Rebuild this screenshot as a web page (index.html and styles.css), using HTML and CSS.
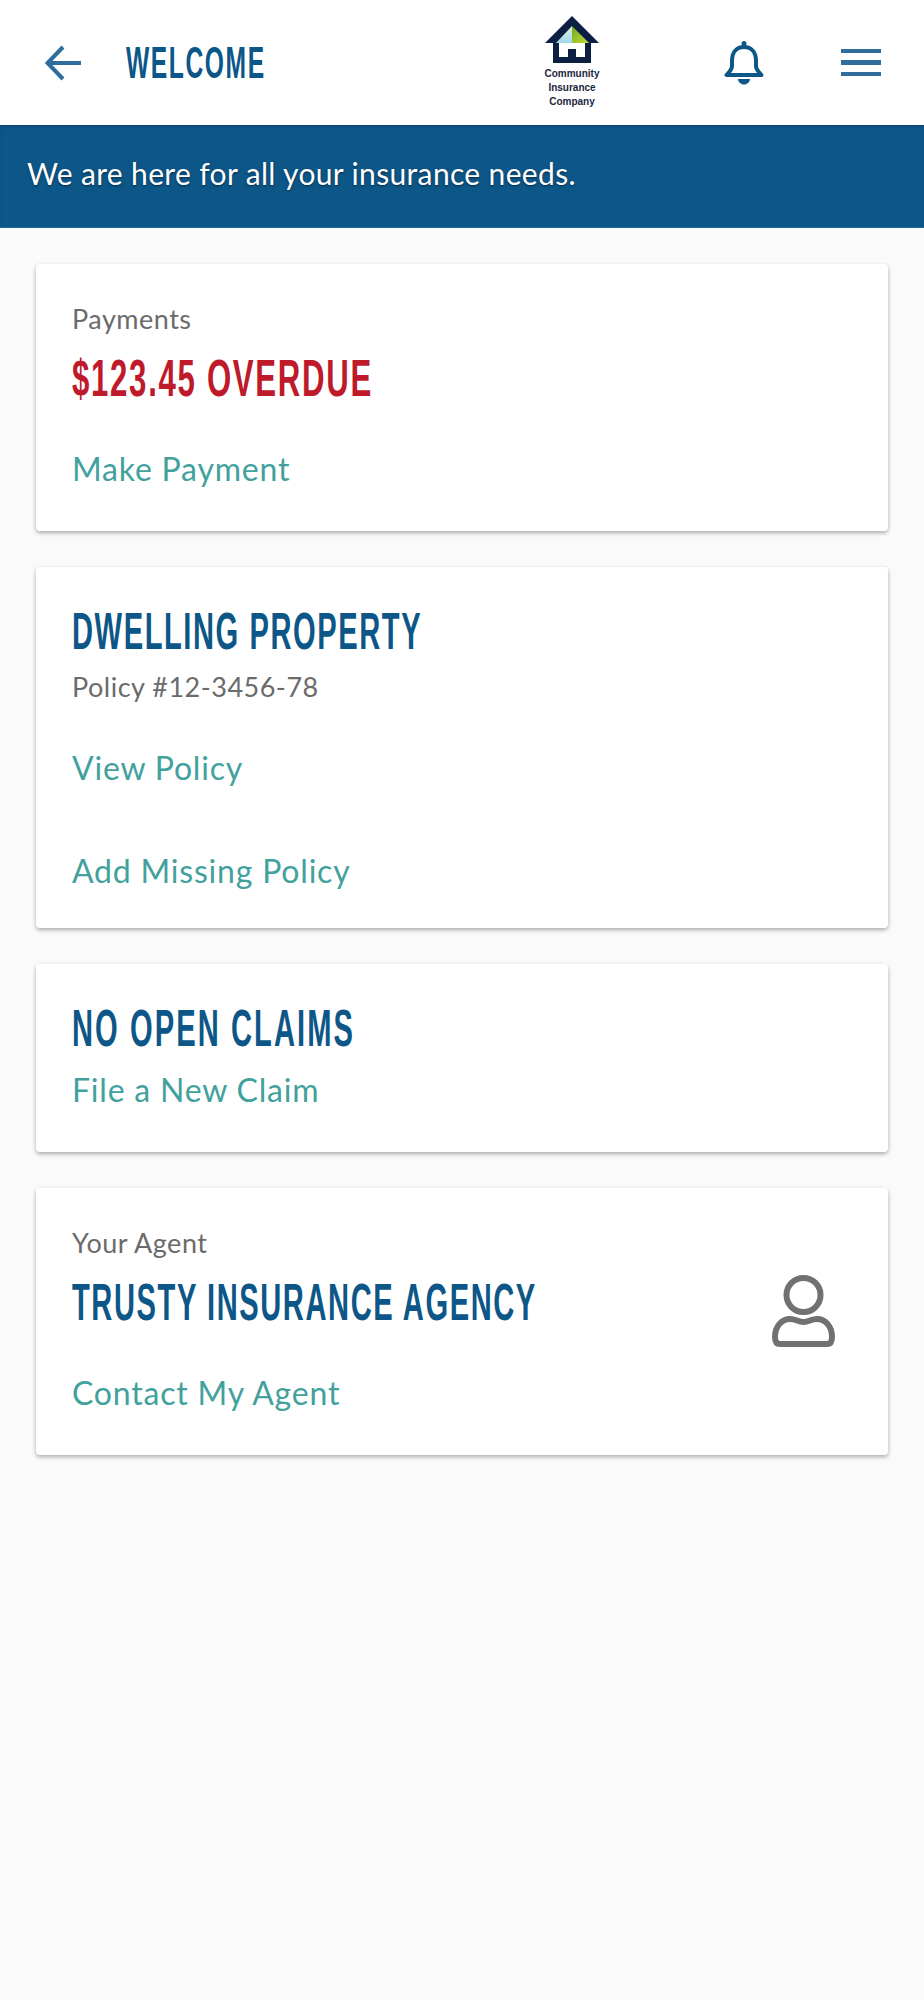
FILE: index.html
```html
<!DOCTYPE html>
<html lang="en">
<head>
    <meta charset="UTF-8">
    <meta name="viewport" content="width=device-width, initial-scale=1.0">
    <title>Welcome</title>
    <link rel="stylesheet" href="styles.css">
</head>
<body>

    <header class="topbar">
        <svg class="back-icon" viewBox="0 0 36 36" fill="none" stroke="#2f6d9c" stroke-width="4">
            <path d="M36 18H3M18 2 2.500 18 18 34"/>
        </svg>
        <div class="title-wrap">
            <h1 class="page-title">WELCOME</h1>
        </div>
        <div class="logo">
            <svg class="logo-house" viewBox="0 0 54 48">
                <defs>
                    <linearGradient id="roofLeft" x1="0" y1="0" x2="0" y2="1">
                        <stop offset="0" stop-color="#e4f1d6"/>
                        <stop offset="1" stop-color="#9fd8f0"/>
                    </linearGradient>
                    <linearGradient id="roofRight" x1="0" y1="0" x2="1" y2="1">
                        <stop offset="0" stop-color="#6fa81e"/>
                        <stop offset="1" stop-color="#c4dc3c"/>
                    </linearGradient>
                </defs>
                <path fill="#0b1f42" d="M27 0 54 27H46V47H8V27H0Z"/>
                <path fill="url(#roofLeft)" d="M27 10V27H11Z"/>
                <path fill="url(#roofRight)" d="M27 10V27H44Z"/>
                <path fill="#fff" d="M14 27H40V41H31V33H23V41H14Z"/>
            </svg>
            <div class="logo-name">Community<br>Insurance<br>Company</div>
        </div>
        <svg class="bell-icon" viewBox="0 0 40 46" fill="none" stroke="#0c5688" stroke-width="4">
            <path d="M20 7C11 7 8 14 8 21V26C8 30 5 32 2.500 35H37.500C35 32 32 30 32 26V21C32 14 29 7 20 7Z" stroke-linejoin="round"/>
            <circle cx="20" cy="3.500" r="2.500" fill="#0c5688" stroke="none"/>
            <path d="M14 39H26C26 42 23 44.500 20 44.500S14 42 14 39Z" fill="#0c5688" stroke="none"/>
        </svg>
        <div class="menu-icon">
            <span></span>
            <span></span>
            <span></span>
        </div>
    </header>

    <div class="banner">We are here for all your insurance needs.</div>

    <main class="cards">
        <section class="card">
            <p class="label">Payments</p>
            <h2 class="heading overdue">$123.45 OVERDUE</h2>
            <a class="link link-first" href="#">Make Payment</a>
        </section>

        <section class="card card-policy">
            <h2 class="heading">DWELLING PROPERTY</h2>
            <p class="label policy-number">Policy #12-3456-78</p>
            <a class="link link-view" href="#">View Policy</a>
            <a class="link link-add" href="#">Add Missing Policy</a>
        </section>

        <section class="card">
            <h2 class="heading heading-wide">NO OPEN CLAIMS</h2>
            <a class="link link-claim" href="#">File a New Claim</a>
        </section>

        <section class="card card-agent">
            <div class="agent-info">
                <p class="label">Your Agent</p>
                <h2 class="heading">TRUSTY INSURANCE AGENCY</h2>
                <a class="link link-first" href="#">Contact My Agent</a>
            </div>
            <svg class="agent-icon" viewBox="0 0 63 72" fill="none" stroke="#717171" stroke-width="6">
                <circle cx="31.500" cy="20" r="17"/>
                <path d="M3 62C3 51 10 44 18 44C24 44 26 47 31.500 47S39 44 45 44C53 44 60 51 60 62C60 67 58 69 55 69H8C5 69 3 67 3 62Z"/>
            </svg>
        </section>
    </main>

</body>
</html>
```

FILE: styles.css
```css
body {
    margin: 0;
    min-height: 2000px;
    background-color: #fafafa;
    color: #6b6b6b;
    font-family: Lato, "Open Sans", sans-serif;
}
p, h1, h2 {
    margin: 0;
}

/* top bar */
.topbar {
    display: flex;
    align-items: center;
    height: 125px;
    padding: 0 43px 0 45px;
    background: #fff;
}
.back-icon {
    width: 36px;
    height: 36px;
    margin-right: 45px;
}
.title-wrap {
    flex: 1;
    min-width: 0;
}
.page-title {
    color: #0c5688;
    font-family: "Liberation Sans", sans-serif;
    font-size: 44px;
    font-weight: 700;
    line-height: 48px;
    letter-spacing: 2.800px;
    white-space: nowrap;
    transform: scaleX(.56);
    transform-origin: left center;
}
.logo {
    width: 60px;
    margin-right: 122px;
    text-align: center;
}
.logo-house {
    display: block;
    width: 54px;
    height: 48px;
    margin: 0 auto 3px;
}
.logo-name {
    color: #1c2740;
    font-family: "Liberation Sans", sans-serif;
    font-size: 10px;
    font-weight: 700;
    line-height: 14px;
}
.bell-icon {
    width: 40px;
    height: 46px;
    margin-right: 77px;
}
.menu-icon {
    display: flex;
    flex-direction: column;
    gap: 7px;
    width: 40px;
}
.menu-icon span {
    height: 4.500px;
    background: #2f6d9c;
}

/* banner */
.banner {
    height: 103px;
    padding-left: 27px;
    background: #0c5688;
    box-shadow: inset 0 2px 2px rgba(0, 0, 0, .15), inset 0 -1px 1px rgba(255, 255, 255, .12);
    color: #fff;
    font-size: 30px;
    line-height: 97px;
    letter-spacing: .35px;
    text-shadow: 0 1px 2px rgba(0, 0, 0, .5);
    box-sizing: border-box;
}

/* cards */
.cards {
    display: flex;
    flex-direction: column;
    gap: 36px;
    padding: 36px 36px 0;
}
.card {
    padding: 40px 36px 41px;
    background: #fff;
    border-radius: 4px;
    box-shadow: 0 2px 4px rgba(0, 0, 0, .32);
}
.label {
    font-size: 27px;
    line-height: 30px;
    letter-spacing: .5px;
}
.heading {
    margin-top: 20px;
    color: #0c5688;
    font-family: "Liberation Sans", sans-serif;
    font-size: 52px;
    font-weight: 700;
    line-height: 48px;
    letter-spacing: 2.800px;
    white-space: nowrap;
    transform: scaleX(.56);
    transform-origin: left center;
}
.card > .heading:first-child {
    margin-top: 0;
}
.heading-wide {
    letter-spacing: 3.700px;
}
.overdue {
    color: #be1a2b;
    transform: scaleX(.6);
}
.link {
    display: block;
    color: #42a19d;
    font-size: 32px;
    line-height: 40px;
    letter-spacing: .8px;
    text-decoration: none;
}
.link-first {
    margin: 47px 0 1px;
}
.policy-number {
    margin-top: 17px;
}
.link-view {
    margin-top: 46px;
}
.link-add {
    margin-top: 63px;
}
.card-policy {
    padding-bottom: 37px;
}
.link-claim {
    margin: 18px 0 1px;
}
.card-agent {
    display: flex;
    align-items: flex-start;
}
.agent-info {
    flex: 1;
    min-width: 0;
}
.agent-icon {
    width: 63px;
    height: 72px;
    margin: 47px 17px 0 0;
}
```
